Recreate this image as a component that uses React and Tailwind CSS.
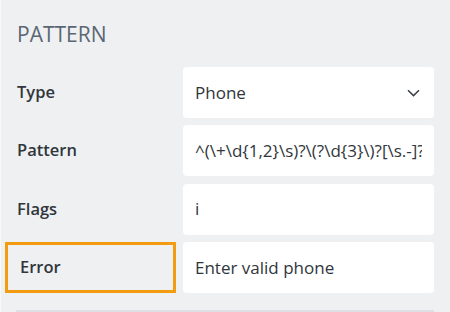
import React from "react";

const font = { fontFamily: '"Open Sans", "Noto Sans", sans-serif' };

function Label({ children, highlight }) {
  return (
    <div
      className={
        "flex items-center h-full pl-[12px] text-[16.5px] font-semibold text-[#30363c] " +
        (highlight ? "border-[3px] border-[#f39c12] pl-[9px]" : "")
      }
    >
      {children}
    </div>
  );
}

function Box({ children }) {
  return (
    <div className="flex items-center h-full bg-white rounded-[4px] pl-[12px] pr-[12px] text-[17px] text-[#30363c] overflow-hidden whitespace-nowrap">
      {children}
    </div>
  );
}

export default function App() {
  return (
    <div
      className="w-[450px] h-[312px] bg-[#eff0f2] border-l border-l-[#f7f8f9] overflow-hidden"
      style={font}
    >
      <div className="pt-[20px] pl-[16px] text-[21px] leading-[28px] text-[#5b6673]">
        PATTERN
      </div>
      <div className="mt-[19px] pl-[4px] pr-[16px] grid grid-cols-[171px_1fr] gap-x-[7px] gap-y-[7.3px] auto-rows-[51px]">
        <Label>Type</Label>
        <Box>
          <span className="flex-1">Phone</span>
          <svg width="13" height="8" viewBox="0 0 13 8" className="mr-[2px]">
            <path d="M1 1.2 L6.5 6.6 L12 1.2" fill="none" stroke="#3a3f45" strokeWidth="1.5" />
          </svg>
        </Box>
        <Label>Pattern</Label>
        <Box>
          <span className="block overflow-hidden">{"^(\\+\\d{1,2}\\s)?\\(?\\d{3}\\)?[\\s.-]?\\d{3}[\\s.-]?\\d{4}$"}</span>
        </Box>
        <Label>Flags</Label>
        <Box>i</Box>
        <Label highlight>Error</Label>
        <Box>Enter valid phone</Box>
      </div>
      <div className="mt-[17px] ml-[15px] mr-[16px] h-[2px] bg-[#dcdfe3]" />
    </div>
  );
}
